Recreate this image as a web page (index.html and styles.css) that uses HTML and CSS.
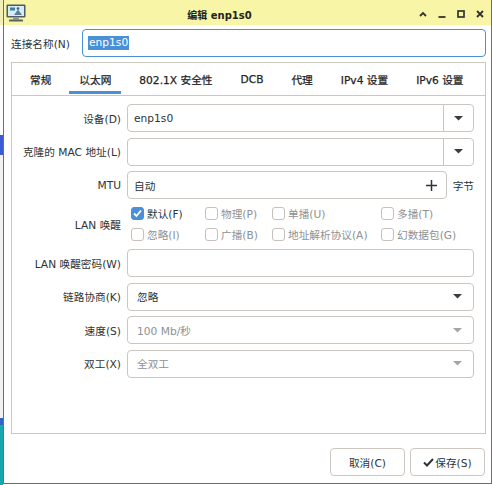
FILE: index.html
```html
<!DOCTYPE html>
<html lang="zh-CN">
<head>
<meta charset="utf-8">
<title>编辑 enp1s0</title>
<link rel="stylesheet" href="styles.css">
</head>
<body>
<div class="desk">
  <div class="d-top"></div>
  <div class="d-white"></div>
  <div class="d-blue"></div>
  <div class="d-white2"></div>
  <div class="d-blue2"></div>
  <div class="d-teal"></div>
</div>
<div class="window">
  <div class="titlebar">
    <svg class="appicon" width="20" height="18" viewBox="0 0 20 18">
      <rect x="0.5" y="0.5" width="19" height="13" rx="1" fill="#4f5c64"/>
      <rect x="2" y="2" width="16" height="10" fill="#d6ecf2"/>
      <rect x="4" y="3.5" width="5" height="3" fill="#3f7ea0"/>
      <path d="M8 11 L12 5.5 L16 11 Z" fill="#5a7f9c"/>
      <circle cx="12" cy="4.5" r="1.3" fill="#2f5f7e"/>
      <rect x="7" y="13.5" width="6" height="2" fill="#8c9296"/>
      <rect x="3" y="15.5" width="14" height="2" rx="0.5" fill="#5b6166"/>
    </svg>
    <div class="title">编辑 enp1s0</div>
    <div class="wctl">
      <span class="wbtn"><svg width="8" height="8" viewBox="0 0 8 8"><polyline points="1,6 4,3 7,6" fill="none" stroke="#333" stroke-width="1.8"/></svg></span>
      <span class="wbtn"><svg width="8" height="8" viewBox="0 0 8 8"><line x1="0.5" y1="7" x2="7.5" y2="7" stroke="#333" stroke-width="1.8"/></svg></span>
      <span class="wbtn"><svg width="8" height="8" viewBox="0 0 8 8"><rect x="1" y="1" width="6" height="6" fill="none" stroke="#333" stroke-width="1.7"/></svg></span>
      <span class="wbtn"><svg width="8" height="8" viewBox="0 0 8 8"><path d="M1 1 L7 7 M7 1 L1 7" stroke="#333" stroke-width="1.8"/></svg></span>
    </div>
  </div>

  <div class="content">
    <div class="namerow">
      <div class="namelabel">连接名称(N)</div>
      <div class="entry focus"><span class="sel">enp1s0</span></div>
    </div>

    <div class="notebook">
      <div class="tabs">
        <div class="tab">常规</div>
        <div class="tab active">以太网</div>
        <div class="tab">802.1X 安全性</div>
        <div class="tab">DCB</div>
        <div class="tab">代理</div>
        <div class="tab">IPv4 设置</div>
        <div class="tab">IPv6 设置</div>
      </div>

      <div class="page">
        <div class="lbl">设备(D)</div>
        <div class="field combo-entry">
          <div class="ce-text">enp1s0</div>
          <div class="ce-btn"><svg width="9" height="5" viewBox="0 0 9 5"><polygon points="0,0 9,0 4.5,4.5" fill="#3a3d3e"/></svg></div>
        </div>

        <div class="lbl">克隆的 MAC 地址(L)</div>
        <div class="field combo-entry">
          <div class="ce-text"></div>
          <div class="ce-btn"><svg width="9" height="5" viewBox="0 0 9 5"><polygon points="0,0 9,0 4.5,4.5" fill="#3a3d3e"/></svg></div>
        </div>

        <div class="lbl">MTU</div>
        <div class="mturow">
          <div class="field spin">
            <div class="ce-text">自动</div>
            <svg class="plus" width="11" height="11" viewBox="0 0 11 11"><path d="M5.5 0 V11 M0 5.5 H11" stroke="#2e3436" stroke-width="1.5"/></svg>
          </div>
          <div class="unit">字节</div>
        </div>

        <div class="lbl">LAN 唤醒</div>
        <div class="wol">
          <div class="ck"><span class="box checked"><svg width="11" height="11" viewBox="0 0 11 11"><polyline points="2,5.5 4.5,8 9,2.5" fill="none" stroke="#fff" stroke-width="1.8"/></svg></span><span>默认(F)</span></div>
          <div class="ck dis"><span class="box"></span><span>物理(P)</span></div>
          <div class="ck dis"><span class="box"></span><span>单播(U)</span></div>
          <div class="ck dis"><span class="box"></span><span>多播(T)</span></div>
          <div class="ck dis"><span class="box"></span><span>忽略(I)</span></div>
          <div class="ck dis"><span class="box"></span><span>广播(B)</span></div>
          <div class="ck dis"><span class="box"></span><span>地址解析协议(A)</span></div>
          <div class="ck dis"><span class="box"></span><span>幻数据包(G)</span></div>
        </div>

        <div class="lbl">LAN 唤醒密码(W)</div>
        <div class="field"></div>

        <div class="lbl">链路协商(K)</div>
        <div class="field combo">
          <div class="cb-text">忽略</div>
          <svg width="9" height="5" viewBox="0 0 9 5"><polygon points="0,0 9,0 4.5,4.5" fill="#3a3d3e"/></svg>
        </div>

        <div class="lbl">速度(S)</div>
        <div class="field combo dis">
          <div class="cb-text">100 Mb/秒</div>
          <svg width="9" height="5" viewBox="0 0 9 5"><polygon points="0,0 9,0 4.5,4.5" fill="#a3a5a6"/></svg>
        </div>

        <div class="lbl">双工(X)</div>
        <div class="field combo dis">
          <div class="cb-text">全双工</div>
          <svg width="9" height="5" viewBox="0 0 9 5"><polygon points="0,0 9,0 4.5,4.5" fill="#a3a5a6"/></svg>
        </div>
      </div>
    </div>

    <div class="actions">
      <button class="btn">取消(C)</button>
      <button class="btn"><svg width="11" height="9" viewBox="0 0 11 9"><polyline points="1,4.5 4,7.5 10,1" fill="none" stroke="#2e3436" stroke-width="2"/></svg><span>保存(S)</span></button>
    </div>
  </div>
</div>
</body>
</html>
```

FILE: styles.css
```css
* { box-sizing: border-box; }
html, body { margin: 0; padding: 0; }
body {
  width: 492px;
  height: 485px;
  display: flex;
  overflow: hidden;
  background: #fff;
  font-family: "DejaVu Sans", "Noto Sans CJK SC", sans-serif;
  font-size: 10.67px;
  color: #2e3436;
}

/* desktop strip behind the window */
.desk { width: 3px; display: flex; flex-direction: column; }
.d-top { height: 25px; background: #f3efb9; }
.d-white { height: 110px; background: #fdfdfd; }
.d-blue { height: 20px; background: #3c5ad6; }
.d-white2 { flex: 1; background: #f2f2f2; }
.d-blue2 { height: 7px; background: #2f63c6; }
.d-teal { height: 60px; background: #17a8ad; }

.window {
  width: 489px;
  height: 484px;
  display: flex;
  flex-direction: column;
  border: 1px solid #6f6f6f;
  border-top: 0;
  background: #fff;
}

.titlebar {
  height: 25px;
  flex: none;
  display: flex;
  align-items: center;
  padding: 3px 2px 0 2px;
  background: #f9f5a6;
}
.appicon { flex: none; margin-top: -2px; }
.title {
  flex: 1;
  text-align: center;
  font-weight: bold;
  font-size: 10px;
  color: #222;
}
.wctl { display: flex; }
.wbtn { width: 19px; height: 14px; display: flex; align-items: center; justify-content: center; }

.content {
  flex: 1;
  display: flex;
  flex-direction: column;
  padding: 4px 5px 7px 7px;
}

.namerow { display: flex; align-items: center; height: 28px; margin-bottom: 5px; }
.namelabel { width: 71px; flex: none; }
.entry {
  flex: 1;
  height: 28px;
  border: 1px solid #c8c3be;
  border-radius: 4px;
  display: flex;
  align-items: center;
  padding-left: 5px;
}
.entry.focus { border-color: #4a90d9; }
.sel { background: #4a90d9; color: #fff; line-height: 14px; padding: 0 1px; }

.notebook {
  flex: 1;
  display: flex;
  flex-direction: column;
  border: 1px solid #cdc7c2;
}
.tabs {
  height: 33px;
  flex: none;
  display: flex;
  padding-left: 4px;
  border-bottom: 1px solid #cdc7c2;
}
.tab {
  display: flex;
  align-items: center;
  padding: 4px 10px 0;
  margin: 0 4px 1px;
  border-bottom: 3px solid transparent;
  white-space: nowrap;
  color: #1f2324;
  -webkit-text-stroke: 0.25px #1f2324;
}
.tab.active { border-bottom-color: #4a90d9; }

.page {
  flex: 1;
  display: grid;
  grid-template-columns: 109px 1fr;
  grid-template-rows: 28px 28px 28px 39.5px 28px 28px 28px 28px;
  column-gap: 6px;
  row-gap: 5.4px;
  align-content: start;
  padding: 8.3px 11px 0 0;
}
.lbl { text-align: right; align-self: center; white-space: nowrap; }

.field {
  height: 28px;
  border: 1px solid #cbc6c1;
  border-radius: 4px;
  background: #fff;
}
.combo-entry, .spin { display: flex; align-items: stretch; }
.ce-text { flex: 1; display: flex; align-items: center; padding-left: 6px; }
.ce-btn {
  width: 30px;
  border-left: 1px solid #cbc6c1;
  display: flex;
  align-items: center;
  justify-content: center;
}
.mturow { display: flex; align-items: center; }
.spin { flex: 1; }
.plus { align-self: center; margin-right: 9px; }
.unit { margin-left: 6px; white-space: nowrap; }

.wol {
  display: grid;
  grid-template-columns: 74px 67px 109px auto;
  grid-template-rows: 19px 19px;
  row-gap: 1.5px;
  padding-left: 4px;
  align-content: center;
}
.ck { display: flex; align-items: center; gap: 3px; white-space: nowrap; }
.ck.dis { color: #8e9192; }
.box {
  width: 13px;
  height: 13px;
  flex: none;
  border: 1px solid #c9bfba;
  border-radius: 3px;
  background: #fff;
  display: flex;
  align-items: center;
  justify-content: center;
}
.box.checked { background: #4a90d9; border-color: #4a90d9; }

.combo {
  display: flex;
  align-items: center;
  padding: 0 11px 0 9px;
}
.cb-text { flex: 1; }
.combo.dis { color: #8e9192; }

.actions {
  display: flex;
  justify-content: flex-end;
  gap: 5px;
  margin-top: 14px;
  margin-right: 1px;
}
.btn {
  width: 75px;
  height: 28px;
  border: 1px solid #cdc7c2;
  border-radius: 4px;
  background: #fff;
  font: inherit;
  color: #2e3436;
  display: flex;
  align-items: center;
  justify-content: center;
  gap: 1px;
  padding: 0;
}
```
